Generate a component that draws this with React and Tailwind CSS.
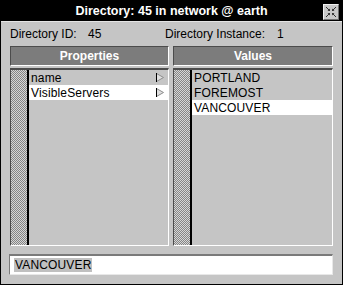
function CloseBtn() {
  return (
    <div className="absolute right-[3px] top-[3px] w-[16px] h-[16px] bg-[#c8c8c8] border-t border-l border-[#f0f0f0] border-b border-r border-b-[#707070] border-r-[#707070]">
      <svg width="14" height="14" viewBox="0 0 14 14" className="block">
        <g stroke="#303030" strokeWidth="1" fill="none">
          <line x1="2" y1="2" x2="5" y2="5" />
          <line x1="12" y1="2" x2="9" y2="5" />
          <line x1="2" y1="12" x2="5" y2="9" />
          <line x1="12" y1="12" x2="9" y2="9" />
        </g>
        <g fill="#303030">
          <polygon points="6,6 3.5,6 6,3.5" />
          <polygon points="8,6 10.5,6 8,3.5" />
          <polygon points="6,8 3.5,8 6,10.5" />
          <polygon points="8,8 10.5,8 8,10.5" />
        </g>
      </svg>
    </div>
  );
}

function Arrow() {
  return (
    <svg width="8" height="9" viewBox="0 0 8 9" className="block">
      <polygon points="0.5,0.5 7.5,4.5 0.5,8.5" fill="#e0e0e0" stroke="#8c8c8c" strokeWidth="1" />
      <line x1="0.5" y1="0" x2="0.5" y2="9" stroke="#000" strokeWidth="1" />
    </svg>
  );
}

function Header({ children }) {
  return (
    <div className="h-[20px] bg-[#7c7c7c] border-t border-l border-[#4c4c4c] border-b border-r border-b-white border-r-white flex items-center justify-center text-white font-bold text-[12px]">
      {children}
    </div>
  );
}

function List({ rows }) {
  return (
    <div className="h-[178px] flex border-t-2 border-l border-[#4c4c4c] border-b border-r border-b-white border-r-white">
      <div className="w-[18px] border-r-2 border-black bg-[image:repeating-conic-gradient(#858585_0%_25%,#d6d6d6_0%_50%)] bg-[length:2px_2px]" />
      <div className="flex-1 flex flex-col">
        {rows.map((r) => (
          <div
            key={r.label}
            className={
              "h-[15px] flex items-center justify-between pl-[2px] pr-[4px] tracking-[0.15px] " +
              (r.selected ? "bg-white" : "")
            }
          >
            <span>{r.label}</span>
            {r.arrow ? <Arrow /> : null}
          </div>
        ))}
      </div>
    </div>
  );
}

export default function App() {
  return (
    <div className="w-[343px] h-[285px] bg-black p-px flex flex-col font-['Liberation_Sans',Arial,sans-serif] text-[12px] leading-[14px] text-black">
      <div className="h-[20px] relative flex items-center justify-center">
        <span className="text-white font-bold text-[12.5px] leading-[16px]">Directory: 45 in network @ earth</span>
        <CloseBtn />
      </div>
      <div className="flex-1 bg-[#c5c5c5] border-t border-[#e4e4e4] px-[9px] pt-[5px] flex flex-col">
        <div className="h-[14px] flex">
          <div className="w-[155px] flex">
            <span className="w-[78px]">Directory ID:</span>
            <span>45</span>
          </div>
          <div className="flex">
            <span className="w-[112px]">Directory Instance:</span>
            <span>1</span>
          </div>
        </div>
        <div className="mt-[5px] grid grid-cols-[159px_160px] gap-x-[4px]">
          <Header>Properties</Header>
          <Header>Values</Header>
          <div className="mt-[2px]">
            <List
              rows={[
                { label: "name", arrow: true },
                { label: "VisibleServers", arrow: true, selected: true },
              ]}
            />
          </div>
          <div className="mt-[2px]">
            <List
              rows={[
                { label: "PORTLAND" },
                { label: "FOREMOST" },
                { label: "VANCOUVER", selected: true },
              ]}
            />
          </div>
        </div>
        <div className="mt-[8px] ml-[-1px] w-[324px] h-[21px] bg-white border-t-2 border-l border-[#7a7a7a] border-b border-r border-b-[#e8e8e8] border-r-[#e8e8e8] pl-[4px] pt-[2px]">
          <span className="inline-block bg-[#c0c0c0] px-[1px] leading-[14px] tracking-[0.15px]">VANCOUVER</span>
        </div>
      </div>
    </div>
  );
}
